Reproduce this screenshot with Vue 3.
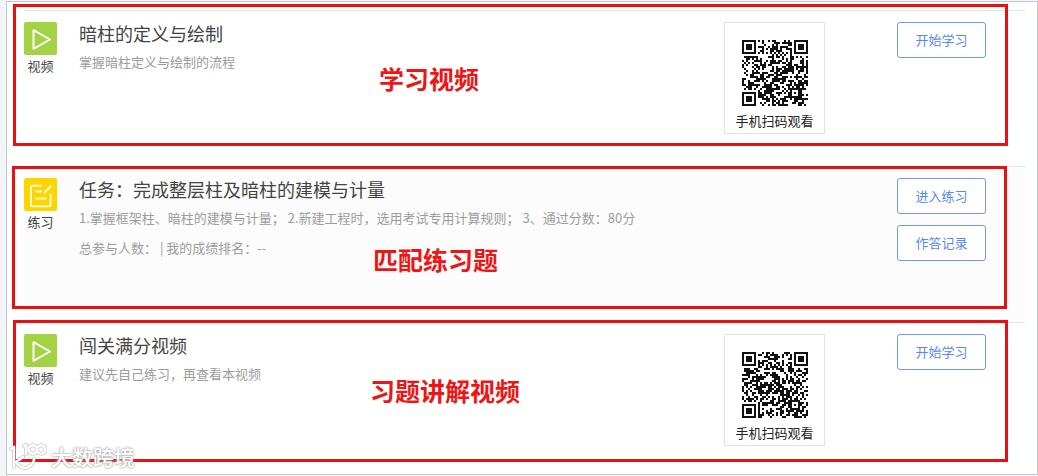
<script setup>
const lessons = [
  {
    id: 'define',
    kind: 'video',
    kindLabel: '视频',
    title: '暗柱的定义与绘制',
    lines: ['掌握暗柱定义与绘制的流程'],
    qrSeed: 7,
    actions: ['开始学习'],
    note: '学习视频',
  },
  {
    id: 'task',
    kind: 'practice',
    kindLabel: '练习',
    title: '任务：完成整层柱及暗柱的建模与计量',
    lines: [
      '1.掌握框架柱、暗柱的建模与计量； 2.新建工程时，选用考试专用计算规则； 3、通过分数：80分',
      '总参与人数： | 我的成绩排名：--',
    ],
    actions: ['进入练习', '作答记录'],
    note: '匹配练习题',
  },
  {
    id: 'review',
    kind: 'video',
    kindLabel: '视频',
    title: '闯关满分视频',
    lines: ['建议先自己练习，再查看本视频'],
    qrSeed: 29,
    actions: ['开始学习'],
    note: '习题讲解视频',
  },
]

const SIZE = 33

// Ring pattern around a centre: dark core, light ring, dark ring
function ring(x, y, cx, cy, outer) {
  const d = Math.max(Math.abs(x - cx), Math.abs(y - cy))
  if (d > outer) return null
  if (outer === 4) return d === 3 || d <= 1
  return d === 2 || d === 0
}

function qrPath(seed) {
  let state = seed * 7919 + 17
  let d = ''
  for (let y = 0; y < SIZE; y++) {
    for (let x = 0; x < SIZE; x++) {
      state = (state * 1103515245 + 12345) % 2147483648
      let dark = state / 2147483648 < 0.52
      if (x === 6 || y === 6) dark = (x + y) % 2 === 0
      const fixed =
        ring(x, y, 3, 3, 4) ??
        ring(x, y, SIZE - 4, 3, 4) ??
        ring(x, y, 3, SIZE - 4, 4) ??
        ring(x, y, 26, 26, 2)
      if (fixed !== null) dark = fixed
      if (dark) d += `M${x} ${y}h1v1h-1z`
    }
  }
  return d
}
</script>

<template>
  <div class="page">
    <main class="frame">
      <article v-for="item in lessons" :key="item.id" class="row" :class="item.id">
        <div class="kind">
          <svg v-if="item.kind === 'video'" class="icon" viewBox="0 0 33 33" aria-hidden="true">
            <rect width="33" height="33" rx="2" fill="#a3d344" />
            <path d="M9.500 8.200v18.600l16.500-9.300z" fill="none" stroke="#fff" stroke-width="2" stroke-linejoin="round" />
          </svg>
          <svg v-else class="icon" viewBox="0 0 33 33" aria-hidden="true">
            <rect width="33" height="33" rx="2" fill="#ffd500" />
            <path d="M18 7.800H8.500a1.500 1.500 0 0 0-1.500 1.500v17.500a1.500 1.500 0 0 0 1.500 1.500h16.500a1.500 1.500 0 0 0 1.500-1.500V16M27.500 7.500l-7.500 7.500M11.500 13.500h6.500M11.500 20.500h11" fill="none" stroke="#fff8cf" stroke-width="2" />
          </svg>
          <span>{{ item.kindLabel }}</span>
        </div>

        <div class="info">
          <h2>{{ item.title }}</h2>
          <p v-for="line in item.lines" :key="line">{{ line }}</p>
        </div>

        <figure v-if="item.qrSeed" class="qr">
          <svg viewBox="0 0 33 33" role="img" aria-label="二维码">
            <path :d="qrPath(item.qrSeed)" fill="#111" />
          </svg>
          <figcaption>手机扫码观看</figcaption>
        </figure>

        <div class="actions">
          <button v-for="action in item.actions" :key="action" type="button">{{ action }}</button>
        </div>

        <div class="mark"></div>
        <strong class="note">{{ item.note }}</strong>
      </article>
    </main>

    <div class="watermark">
      <svg viewBox="0 0 38 30" aria-hidden="true">
        <g fill="none" stroke-linecap="round" stroke-linejoin="round">
          <g stroke="#999" stroke-width="4" opacity="0.500">
            <path d="M2 8l3-2v20M14 16l-7 5c3 5 9 8 14 4 3-2 4-4 4-7M15 5l2-1v9M28 8.500a4.200 4.200 0 1 1-8.400 0a4.200 4.200 0 0 1 8.400 0a4.200 4.200 0 1 1 8.400 0a4.200 4.200 0 0 1-8.400 0" />
          </g>
          <g stroke="#fff" stroke-width="2.400">
            <path d="M2 8l3-2v20M14 16l-7 5c3 5 9 8 14 4 3-2 4-4 4-7M15 5l2-1v9M28 8.500a4.200 4.200 0 1 1-8.400 0a4.200 4.200 0 0 1 8.400 0a4.200 4.200 0 1 1 8.400 0a4.200 4.200 0 0 1-8.400 0" />
          </g>
        </g>
      </svg>
      <span>大数跨境</span>
    </div>
  </div>
</template>

<style>
body {
  margin: 0;
  background: #f4f5f8;
}
</style>

<style scoped>
.page {
  position: relative;
  padding: 1px 0 1px 6px;
  font-family: "Noto Sans CJK SC", "Noto Sans", sans-serif;
  color: #444;
}

.frame {
  padding: 8px 12px 0 17px;
  border: 1px solid #c3c8d0;
  background: #fff;
}

.row {
  position: relative;
  box-sizing: border-box;
  display: flex;
  align-items: flex-start;
  min-height: 156px;
  padding: 11px 39px 0 0;
  border-top: 1px solid #e3e5e7;
}

.row.task {
  background: #fcfcfc;
}

.row.review {
  min-height: 152px;
}

.kind {
  flex: none;
  width: 33px;
  margin-right: 22px;
  display: flex;
  flex-direction: column;
  align-items: center;
  font-size: 13px;
  line-height: 22px;
  white-space: nowrap;
}

.icon {
  display: block;
  width: 33px;
  height: 33px;
}

.info {
  flex: 1;
  min-width: 0;
}

h2 {
  margin: 0 0 4px;
  font-size: 18px;
  font-weight: 400;
  line-height: 22px;
  color: #444;
}

p {
  margin: 0 0 2px;
  font-size: 13px;
  line-height: 28px;
  color: #9c9c9c;
}

.qr {
  flex: none;
  box-sizing: border-box;
  width: 101px;
  margin: 0 72px 0 0;
  padding: 17px 0 2px;
  border: 1px solid #e2e2e2;
  background: #fff;
  text-align: center;
}

.qr svg {
  display: block;
  width: 66px;
  height: 66px;
  margin: 0 auto 5px;
}

figcaption {
  font-size: 13px;
  line-height: 20px;
  color: #222;
}

.actions {
  flex: none;
  display: flex;
  flex-direction: column;
  gap: 11px;
}

button {
  box-sizing: border-box;
  width: 89px;
  height: 36px;
  padding: 0 0 2px;
  border: 1px solid #6c99fa;
  border-radius: 3px;
  background: #fff;
  font-family: inherit;
  font-size: 13px;
  color: #5589f7;
  cursor: pointer;
}

/* Highlight outlines and notes laid over the lesson rows */
.mark {
  position: absolute;
  top: -7px;
  right: 17px;
  bottom: 20px;
  left: -11px;
  border: 3px solid #e81010;
  pointer-events: none;
}

.task .mark {
  top: -1px;
  right: 18px;
  bottom: 13px;
  left: -12px;
}

.review .mark {
  top: -3px;
  bottom: 12px;
}

.note {
  position: absolute;
  top: 51px;
  left: 355px;
  font-size: 25px;
  font-weight: 700;
  line-height: 32px;
  color: #f01414;
  white-space: nowrap;
}

.task .note {
  top: 76px;
  left: 349px;
}

.review .note {
  left: 346px;
}

.watermark {
  position: absolute;
  bottom: 5px;
  left: 9px;
  display: flex;
  align-items: center;
  gap: 4px;
  font-size: 21px;
  font-weight: 500;
  line-height: 30px;
  color: #fff;
  text-shadow: 0 0 2px #999, 0 0 3px #bbb;
}

.watermark svg {
  width: 38px;
  height: 30px;
}
</style>
